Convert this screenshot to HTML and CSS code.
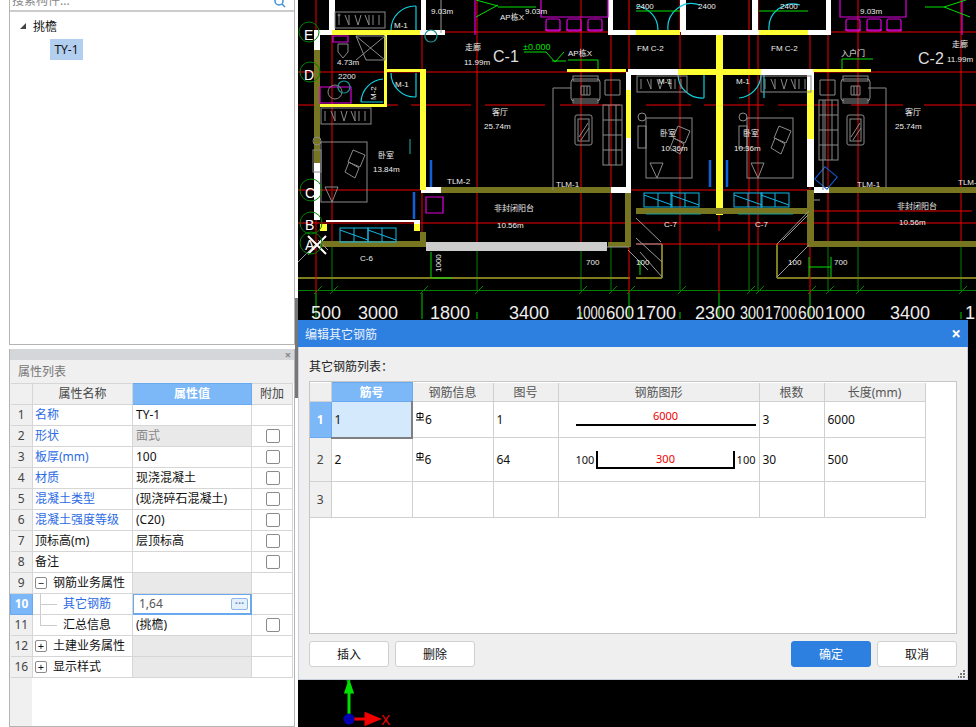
FILE: index.html
```html
<!DOCTYPE html>
<html lang="en">
<head>
<meta charset="UTF-8" />
<title>编辑其它钢筋</title>
<link rel="stylesheet" href="styles.css">
</head>
<body>

<aside class="side">
  <section class="tree-panel">
    <div class="search">
      <span class="search-text">搜索构件...</span>
      <svg class="search-icon" width="12" height="10" viewBox="0 0 12 10"><circle cx="5" cy="1" r="4"/><path d="M8 4l3 3"/></svg>
    </div>
    <div class="tree-group"><span class="tree-arrow"></span>挑檐</div>
    <div class="tree-leaf">TY-1</div>
  </section>

  <section class="prop-panel">
    <div class="prop-strip">×</div>
    <div class="prop-title">属性列表</div>
    <table class="prop-table">
      <colgroup><col class="c-no"><col class="c-name"><col class="c-val"><col class="c-add"></colgroup>
      <tr><th></th><th>属性名称</th><th class="sel">属性值</th><th>附加</th></tr>
      <tr><td class="no">1</td><td class="link">名称</td><td>TY-1</td><td></td></tr>
      <tr><td class="no">2</td><td class="link">形状</td><td class="off">面式</td><td class="chk"><span class="box"></span></td></tr>
      <tr><td class="no">3</td><td class="link">板厚(mm)</td><td>100</td><td class="chk"><span class="box"></span></td></tr>
      <tr><td class="no">4</td><td class="link">材质</td><td>现浇混凝土</td><td class="chk"><span class="box"></span></td></tr>
      <tr><td class="no">5</td><td class="link">混凝土类型</td><td>(现浇碎石混凝土)</td><td class="chk"><span class="box"></span></td></tr>
      <tr><td class="no">6</td><td class="link">混凝土强度等级</td><td>(C20)</td><td class="chk"><span class="box"></span></td></tr>
      <tr><td class="no">7</td><td>顶标高(m)</td><td>层顶标高</td><td class="chk"><span class="box"></span></td></tr>
      <tr><td class="no">8</td><td>备注</td><td></td><td class="chk"><span class="box"></span></td></tr>
      <tr><td class="no">9</td><td><div class="cell-row"><span class="fold">−</span>钢筋业务属性</div></td><td class="grp"></td><td></td></tr>
      <tr><td class="no cur">10</td><td class="flush"><div class="cell-row link"><span class="branch"></span>其它钢筋</div></td>
        <td class="editing"><div class="edit-row">1,64<span class="more">···</span></div></td><td></td></tr>
      <tr><td class="no">11</td><td class="flush"><div class="cell-row"><span class="branch last"></span>汇总信息</div></td><td>(挑檐)</td><td class="chk"><span class="box"></span></td></tr>
      <tr><td class="no">12</td><td><div class="cell-row"><span class="fold">+</span>土建业务属性</div></td><td class="grp"></td><td></td></tr>
      <tr><td class="no">16</td><td><div class="cell-row"><span class="fold">+</span>显示样式</div></td><td class="grp"></td><td></td></tr>
    </table>
  </section>
  <span class="splitter"></span>
</aside>

<main class="cad">
  <svg class="plan" width="678" height="727" viewBox="298 0 678 727">
    <defs>
      <g id="rebar-box">
        <rect width="28" height="14"/><path d="M0 2l28 10M14 0v14"/>
      </g>
      <g id="sofa">
        <rect x="0" y="0" width="29" height="22" rx="3"/><rect x="2" y="-3" width="25" height="5"/><rect x="2" y="20" width="25" height="4"/>
        <path d="M10 7h9v9h-9zM13 7v9M16 7v9"/>
      </g>
      <g id="couch">
        <rect x="0" y="0" width="19" height="60"/><path d="M6 0v60M13 0v60M0 15h19M0 30h19M0 45h19"/>
      </g>
      <g id="table">
        <rect x="0" y="0" width="17" height="30" rx="2"/><rect x="3" y="4" width="11" height="22"/><path d="M4 22l9-14M6 25l8-12"/>
      </g>
      <g id="bed">
        <rect x="0" y="0" width="46" height="60"/><rect x="-8" y="8" width="8" height="22"/><path d="M4 45l7 15 6-15zM32 8l12 5-5 12-12-5zM28 20l10 6-4 10-10-6z"/>
        <circle cx="-4" cy="-1" r="4"/>
      </g>
      <g id="wc-strip">
        <rect x="0" y="0" width="50" height="16"/><path d="M4 3v10M10 3l4 10V3M20 3l3 10 3-10M30 3l4 10V3M38 3v10M44 3v10"/>
      </g>
      <g id="chair">
        <rect x="0" y="0" width="14" height="12" rx="2"/><path d="M-1 11h16"/>
      </g>
    </defs>

    <!-- grid -->
    <path class="dk-green" d="M298 290.5H976M332 245v45M477 245v45M581 245v45M611 245v45M680 245v45M749 245v45M758 245v45M828 245v45M858 245v45M961 245v45"/>
    <path class="dk-green" d="M314 294l8-8M330 294l8-8M420 294l8-8M475 294l8-8M579 294l8-8M609 294l8-8M627 294l8-8M678 294l8-8M747 294l8-8M756 294l8-8M808 294l8-8M826 294l8-8M856 294l8-8M959 294l8-8"/>
    <path class="green" d="M316 293v26M422 293v26M629 293v26M719 293v26M810 293v26M477 312v7M581 312v7M680 312v7M749 312v7M961 312v7"/>
    <path class="olive-line" d="M298 278H630M636 278H662M777 278H976M777 244V278M662 244V278"/>

    <path class="red" d="M315 32H976M298 72H628M811 72H976M298 105H315M320 105H398M411 105H471M485 105H545M560 105H620M646 105H691M704 105H764M778 105H838M851 105H903M924 105H976"/>
    <path class="red" d="M298 190H716M723 190H809M298 223H976M813 211H972M636 244H808"/>
    <path class="red" d="M316 0V293M422 30V245M477 0V245M581 0V245M611 0V245M629 0V293M680 0V245M749 0V245M758 0V245M810 32V294M828 0V245M858 0V245M961 0V245M719 215V231M719 245V293"/>
    <path class="dk-red" d="M332 32V245"/>

    <!-- walls -->
    <path class="white" d="M329 0h6v30h-6zM314 30h20v5h-20zM314 35h6v15h-6zM421 0h5v30h-5zM420 30h25v5h-25zM608 0h5v30h-5zM608 30h28v5h-28zM681 30h78v5h-78zM680 0h6v32h-6zM752 0h6v32h-6zM808 30h23v5h-23zM826 0h5v32h-5z"/>
    <path class="white" d="M636 69h42v6h-42zM761 69h52v6h-52zM626 72h5v18h-5zM626 138h5v50h-5zM807 72h7v18h-7zM807 139h7v48h-7zM814 187h15v6h-15zM611 187h20v6h-20zM421 160h5v33h-5zM426 187h15v6h-15zM314 163h6v57h-6zM414 220h6v10h-6zM326 220h88v2h-88zM628 69h8v6h-8z"/>
    <path class="yellow" d="M332 30h88v5h-88zM636 30h44v5h-44zM759 30h49v5h-49zM384 32h3v73h-3zM317 104h70v3h-70zM386 69h40v3h-40zM420 72h6v118h-6zM567 69h59v3h-59zM626 90h5v48h-5zM678 69h83v6h-83zM716 35h7v173h-7zM807 90h7v49h-7zM813 69h58v3h-58zM320 224h7v7h-7zM414 224h6v7h-6zM716 208h7v7h-7z"/>
    <path class="olive" d="M314 50h6v113h-6zM320 241h106v6h-106zM420 232h6v9h-6zM441 187h170v6h-170zM625 193h6v54h-6zM608 242h23v5h-23zM636 208h172v6h-172zM829 187h147v6h-147zM807 190h7v57h-7zM811 241h165v6h-165z"/>
    <rect class="concrete" x="426" y="242" width="181" height="9"/>

    <!-- doors, windows -->
    <path class="cyan" d="M416 6A24 24 0 0 0 391 30M416 6V30M391 73A24 24 0 0 0 416 97M416 73V97M361 102A24 24 0 0 1 383 79M361 102H383"/>
    <path class="cyan" d="M636 6A24 24 0 0 1 658 30M668 30A24 24 0 0 1 700 5M769 30A24 24 0 0 1 800 5M678 75A24 24 0 0 0 704 98M704 75V98M764 75V98M739 98A24 24 0 0 0 761 75"/>
    <g class="cyan-box">
      <use href="#rebar-box" x="340" y="228"/><use href="#rebar-box" x="368" y="228"/>
      <use href="#rebar-box" x="644" y="193"/><use href="#rebar-box" x="671" y="193"/>
      <use href="#rebar-box" x="734" y="193"/><use href="#rebar-box" x="761" y="193"/>
    </g>
    <path class="cyan-thin" d="M646 214h55M738 214h55"/>
    <path class="blue" d="M431 160V187M414 192V219M710 160V187M727 160V187"/>
    <rect class="blue-thin" x="818" y="170" width="16" height="16" transform="rotate(40 826 178)"/>

    <!-- magenta -->
    <path class="magenta" d="M333 36h15v6h-15zM320 87h31v16h-31zM475 0v35M541 0v17h67V0M840 0v17h66V0M962 0v35M426 197h17v16h-17z"/>
    <g class="magenta">
      <use href="#chair" x="546" y="19"/><use href="#chair" x="567" y="19"/><use href="#chair" x="588" y="19"/>
      <use href="#chair" x="846" y="19"/><use href="#chair" x="867" y="19"/><use href="#chair" x="887" y="19"/>
    </g>

    <!-- green marks -->
    <path class="bright" d="M476 17L498 5M498 6L476 0M498 7H536M636 11H680M759 11H808M524 52H546L555 62L564 52M552 61H566M568 60H598V69M842 69V59H873M944 7L966 0M944 7L970 17M925 7H944M431 252V278M433 278H452M640 260v15M809 267H831M809 257v20M831 257v20"/>
    <text class="lbl-green" x="523" y="50">±0.000</text>

    <!-- furniture -->
    <g class="gray">
      <use href="#wc-strip" x="335" y="12"/><use href="#wc-strip" x="321" y="108"/>
      <use href="#wc-strip" x="637" y="76"/><use href="#wc-strip" x="761" y="76"/>
      <path d="M356 36h29v24h-19zM356 36l29 24M385 36l-29 24M553 190V88h18"/>
      <path d="M338 44h10v8l-5 6-5-6z"/>
      <use href="#sofa" x="571" y="79"/><use href="#sofa" x="841" y="79"/>
      <use href="#table" x="575" y="115"/><use href="#table" x="847" y="115"/>
      <use href="#couch" x="603" y="105"/><use href="#couch" x="819" y="100"/>
      <path d="M868 88h18v100M605 80h15v15h-15zM820 80h15v15h-15zM823 190V100"/>
      <use href="#bed" x="321" y="142" /><use href="#bed" x="646" y="118"/><use href="#bed" x="747" y="118"/>
      <circle cx="335" cy="92" r="7"/><circle cx="339" cy="15" r="1"/>
    </g>
    <path class="teal" d="M344 93a6 6 0 1 0-.1 0M431 42a6 6 0 1 0-.1 0M410 139v15"/>
    <path class="concrete-line" d="M441 0v33M820 200l-6 0M636 218l25 24M808 215l-25 25M777 244l32-33M636 238l26 24M777 277l32-32M662 244H636M607 247l22 0M628 250l20 20M298 262l18-18M318 240l10 10M662 277L640 252"/>
    <path class="cross" d="M308 236L326 254M326 236L308 254"/>
    <circle class="grid-ring" cx="309" cy="32" r="10"/><circle class="grid-ring" cx="310" cy="72" r="10"/><circle class="grid-ring" cx="311" cy="190" r="11"/><circle class="grid-ring" cx="311" cy="223" r="11"/><circle class="grid-ring" cx="311" cy="243" r="11"/>

    <!-- labels -->
    <g class="lbl">
      <text x="394" y="28">M-1</text><text x="395" y="87">M-1</text>
      <text x="376" y="100" transform="rotate(-90 376 100)">M-2</text>
      <text x="658" y="84">M-1</text><text x="736" y="84">M-1</text><text x="698" y="9">2400</text><text x="780" y="9">2400</text><text x="636" y="9">2400</text>
      <text x="337" y="65">4.73m</text><text x="338" y="79">2200</text><text x="464" y="65">11.99m</text>
      <text x="484" y="129">25.74m</text><text x="895" y="129">25.74m</text><text x="947" y="62">11.99m</text>
      <text x="431" y="14">9.03m</text><text x="525" y="14">9.03m</text><text x="860" y="14">9.03m</text>
      <text x="492" y="115">客厅</text><text x="905" y="115">客厅</text><text x="465" y="50">走廊</text><text x="952" y="47">走廊</text>
      <text x="373" y="172">13.84m</text><text x="378" y="158">卧室</text><text x="660" y="136">卧室</text><text x="743" y="136">卧室</text>
      <text x="661" y="151">10.36m</text><text x="734" y="151">10.36m</text>
      <text x="447" y="184">TLM-2</text><text x="556" y="187">TLM-1</text><text x="857" y="187">TLM-1</text><text x="958" y="185">TLM-</text>
      <text x="494" y="211">非封闭阳台</text><text x="897" y="209">非封闭阳台</text><text x="497" y="228">10.56m</text><text x="899" y="225">10.56m</text>
      <text x="360" y="261">C-6</text><text x="664" y="227">C-7</text><text x="755" y="227">C-7</text>
      <text x="586" y="265">700</text><text x="788" y="265">100</text><text x="834" y="265">700</text><text x="636" y="265">100</text>
      <text x="441" y="272" transform="rotate(-90 441 272)">1000</text>
      <text x="637" y="51">FM C-2</text><text x="771" y="51">FM C-2</text><text x="500" y="20">AP栋X</text><text x="568" y="56">AP栋X</text><text x="841" y="56">入户门</text>
    </g>
    <text class="lbl-big" x="493" y="62">C-1</text><text class="lbl-big" x="918" y="64">C-2</text>
    <g class="lbl-axis">
      <text x="304" y="40">E</text><text x="304" y="80">D</text><text x="305" y="198">C</text><text x="305" y="230">B</text><text x="305" y="250">A</text>
    </g>
    <g class="dim">
      <text x="311" y="319">500</text><text x="358" y="319">3000</text><text x="430" y="319">1800</text><text x="509" y="319">3400</text>
      <text x="576" y="319" textLength="29" lengthAdjust="spacingAndGlyphs">1000</text><text x="606" y="319" textLength="28" lengthAdjust="spacingAndGlyphs">600</text><text x="636" y="319">1700</text><text x="695" y="319">2300</text><text x="740" y="319" textLength="24" lengthAdjust="spacingAndGlyphs">300</text>
      <text x="765" y="319" textLength="32" lengthAdjust="spacingAndGlyphs">1700</text><text x="798" y="319" textLength="26" lengthAdjust="spacingAndGlyphs">600</text><text x="825" y="319">1000</text><text x="890" y="319">3400</text><text x="965" y="319">1</text>
    </g>

    <!-- axis marker -->
    <text class="axis-y-txt" x="345" y="686">Y</text>
    <path class="axis-y" d="M349 719V692M346 692L349 683L352 692Z"/>
    <path class="axis-x" d="M349 719H366M366 714L378 719L366 724Z"/>
    <circle class="axis-o" cx="349" cy="719" r="5.5"/>
    <text class="axis-x-txt" x="381" y="725">X</text>
  </svg>

  <div class="dialog">
    <div class="dialog-title"><span>编辑其它钢筋</span><span class="dialog-close">×</span></div>
    <div class="dialog-body">
      <div class="list-label">其它钢筋列表：</div>
      <div class="grid-box">
        <table class="rebar-table">
          <colgroup><col class="r-no"><col class="r-id"><col class="r-info"><col class="r-fig"><col class="r-shape"><col class="r-num"><col class="r-len"></colgroup>
          <tr><th></th><th class="sel">筋号</th><th>钢筋信息</th><th>图号</th><th>钢筋图形</th><th>根数</th><th>长度(mm)</th></tr>
          <tr class="row-a">
            <td class="no cur">1</td><td class="cell-sel">1</td>
            <td><svg class="grade" width="8" height="9" viewBox="0 0 8 9"><path d="M1 1.5h6v4H1zM4 0v8M0 8h8"/></svg>6</td>
            <td>1</td>
            <td class="shape"><div class="bar-label">6000</div><div class="bar-line"></div></td>
            <td>3</td><td>6000</td>
          </tr>
          <tr class="row-b">
            <td class="no">2</td><td>2</td>
            <td><svg class="grade" width="8" height="9" viewBox="0 0 8 9"><path d="M1 1.5h6v4H1zM4 0v8M0 8h8"/></svg>6</td>
            <td>64</td>
            <td class="shape"><div class="bar-row"><span>100</span><div class="bracket">300</div><span>100</span></div></td>
            <td>30</td><td>500</td>
          </tr>
          <tr class="row-a"><td class="no">3</td><td></td><td></td><td></td><td></td><td></td><td></td></tr>
        </table>
      </div>
      <div class="actions">
        <button class="btn">插入</button>
        <button class="btn">删除</button>
        <span class="spacer"></span>
        <button class="btn primary">确定</button>
        <button class="btn">取消</button>
      </div>
    </div>
    <svg class="grip" width="8" height="8" viewBox="0 0 8 8"><path d="M5 0h2v2H5zM2 3h2v2H2zM5 3h2v2H5zM-1 6h2v2h-2zM2 6h2v2H2zM5 6h2v2H5z"/></svg>
  </div>
</main>

</body>
</html>
```

FILE: styles.css
```css
html, body {
  margin: 0;
  padding: 0;
  height: 100%;
  overflow: hidden;
}
body {
  display: flex;
  background: #fff;
  font-family: "Noto Sans", "Noto Sans CJK SC", sans-serif;
  font-size: 12px;
  color: #111;
}

/* left column */
.side {
  position: relative;
  width: 298px;
  flex: none;
  height: 727px;
  padding-left: 9px;
  padding-right: 3px;
  box-sizing: border-box;
  display: flex;
  flex-direction: column;
  gap: 4px;
}
.tree-panel {
  height: 345px;
  flex: none;
  box-sizing: border-box;
  border: 1px solid #b4b4b4;
  border-top: 0;
}
.search {
  height: 10px;
  overflow: hidden;
  display: flex;
  justify-content: space-between;
  padding: 0 8px 0 2px;
  border-bottom: 2px solid #ccc;
}
.search-text {
  color: #888;
  line-height: 12px;
  margin-top: -5px;
}
.search-icon circle, .search-icon path {
  fill: none;
  stroke: #3f8fd8;
  stroke-width: 1.5;
}
.tree-group {
  display: flex;
  align-items: center;
  height: 20px;
  margin-top: 4px;
  padding-left: 10px;
  gap: 7px;
  font-size: 12px;
}
.tree-arrow {
  width: 0;
  height: 0;
  border-left: 6px solid transparent;
  border-bottom: 6px solid #444;
}
.tree-leaf {
  width: 33px;
  height: 21px;
  margin: 3px 0 0 40px;
  line-height: 21px;
  text-align: center;
  background: #b3cfef;
}

.prop-panel {
  flex: 1;
  display: flex;
  flex-direction: column;
  border: 1px solid #b4b4b4;
  border-top: 0;
  background: #fff;
  background-image: linear-gradient(#f0f0f0, #f0f0f0);
  background-repeat: no-repeat;
  background-size: 22px 100%;
}
.prop-strip {
  height: 11px;
  line-height: 11px;
  background: #d5d6d9;
  color: #888;
  text-align: right;
  padding-right: 3px;
  font-size: 11px;
  font-weight: bold;
}
.prop-title {
  height: 23px;
  line-height: 23px;
  background: #f0f0f0;
  color: #777;
  padding-left: 8px;
}
.prop-table {
  border-collapse: collapse;
  table-layout: fixed;
  width: 282px;
}
.c-no { width: 22px; }
.c-name { width: 100px; }
.c-val { width: 119px; }
.c-add { width: 41px; }
.prop-table th, .prop-table td {
  height: 21px;
  padding: 0 3px;
  box-sizing: border-box;
  border: 1px solid #d6d6d6;
  font-weight: normal;
  white-space: nowrap;
  overflow: hidden;
  line-height: 20px;
}
.prop-table td:nth-child(2) { padding-left: 2px; }
.prop-table th {
  height: 20px;
  background: #f0f0f0;
  color: #444;
}
.prop-table tr > :first-child { border-left: 0; }
th.sel {
  background: #7cb8f8 !important;
  color: #fff !important;
  font-weight: bold !important;
  border: 1px solid #69a9ee !important;
}
td.no {
  background: #f0f0f0;
  color: #444;
  text-align: center;
  font-size: 12px;
  padding: 0 !important;
}
td.no.cur {
  background: #7cb8f8;
  color: #fff;
  font-weight: bold;
  border: 1px solid #69a9ee;
}
.link { color: #2b6be4; }
td.off {
  background: #e9e9e9;
  color: #888;
}
td.grp { background: #e9e9e9; }
.prop-table td.chk {
  text-align: center;
  padding: 0 0 0 1px;
  line-height: 0;
}
.box {
  display: inline-block;
  width: 12px;
  height: 12px;
  vertical-align: middle;
  border: 1px solid #8a8a8a;
  border-radius: 2px;
}
.cell-row {
  display: flex;
  align-items: center;
  height: 20px;
}
.fold {
  width: 10px;
  height: 10px;
  line-height: 9px;
  margin-right: 6px;
  flex: none;
  text-align: center;
  border: 1px solid #8a8a8a;
  border-radius: 2px;
  font-size: 11px;
}
.prop-table td.flush { padding: 0 0 0 7px; }
.branch {
  align-self: stretch;
  width: 17px;
  margin-right: 6px;
  flex: none;
  background:
    linear-gradient(#ccc, #ccc) 0 0 / 1px 100% no-repeat,
    linear-gradient(#ccc, #ccc) 0 10px / 100% 1px no-repeat;
}
.branch.last {
  background:
    linear-gradient(#ccc, #ccc) 0 0 / 1px 11px no-repeat,
    linear-gradient(#ccc, #ccc) 0 10px / 100% 1px no-repeat;
}
.prop-table td.editing {
  padding: 0;
  border: 1px solid #69a9ee;
  box-shadow: inset 0 0 0 1px #69a9ee;
}
.edit-row {
  display: flex;
  justify-content: space-between;
  align-items: center;
  padding: 0 3px 0 6px;
  color: #555;
  height: 20px;
}
.more {
  width: 15px;
  height: 10px;
  line-height: 7px;
  text-align: center;
  border: 1px solid #8ab8e8;
  border-radius: 2px;
  background: #e6f0fb;
  color: #5c8fc4;
  font-weight: bold;
  font-size: 11px;
}
.splitter {
  position: absolute;
  right: 0;
  top: 298px;
  width: 3px;
  height: 100px;
  background: #777;
}

/* drawing */
.cad {
  position: relative;
  flex: 1;
  background: #000;
  overflow: hidden;
}
.plan {
  display: block;
  fill: none;
}
.dk-green { stroke: #008000; }
.green { stroke: #00c800; }
.bright { stroke: #00e000; }
.olive-line { stroke: #807c20; stroke-width: 2; }
.red { stroke: #f00000; }
.dk-red { stroke: #a00000; stroke-width: 1.5; }
.white { fill: #fff; }
.yellow { fill: #ffff33; }
.olive { fill: #77751f; }
.concrete { fill: #ccc; }
.cyan { stroke: #10d0e0; stroke-width: 1.2; }
.cyan-box { stroke: #10b8e8; }
.cyan-thin { stroke: #10a0a0; }
.blue { stroke: #1060d8; stroke-width: 2.5; }
.blue-thin { stroke: #1060d8; }
.magenta { stroke: #e000e0; stroke-width: 1.2; }
.gray { stroke: #8a8a8a; }
.teal { stroke: #209090; stroke-width: 1.2; }
.concrete-line { stroke: #999; }
.cross { stroke: #fff; stroke-width: 2; }
.grid-ring { stroke: #008000; }
.lbl {
  fill: #eee;
  font: 8px "Liberation Sans", "Noto Sans CJK SC", sans-serif;
}
.lbl-green {
  fill: #00e000;
  font: 9px "Liberation Sans", sans-serif;
}
.lbl-big {
  fill: #ddd;
  font: 16px "Liberation Sans", sans-serif;
}
.lbl-axis {
  fill: #fff;
  font: 14px "Liberation Sans", sans-serif;
}
.dim {
  fill: #eee;
  font: 18px "Liberation Sans", sans-serif;
}
.axis-y { stroke: #00e000; stroke-width: 3; fill: #00e000; }
.axis-x { stroke: #f00000; stroke-width: 3; fill: #f00000; }
.axis-o { fill: #0000b0; }
.axis-x-txt {
  fill: #f00000;
  font: 14px "Liberation Sans", sans-serif;
}
.axis-y-txt {
  fill: #00e000;
  font: 10px "Liberation Sans", sans-serif;
}

/* dialog */
.dialog {
  position: absolute;
  left: 0;
  top: 320px;
  width: 670px;
  height: 360px;
  display: flex;
  flex-direction: column;
  background: #efefef;
  box-sizing: border-box;
  border: 1px solid #c8cede;
  border-top: 0;
}
.dialog-title {
  height: 27px;
  flex: none;
  margin: 0 -1px;
  padding: 0 7px 0 7px;
  display: flex;
  justify-content: space-between;
  align-items: center;
  background: #2d7fe0;
  color: #eaf2fc;
}
.dialog-close {
  color: #fff;
  font-size: 17px;
  font-weight: bold;
}
.dialog-body {
  flex: 1;
  display: flex;
  flex-direction: column;
  padding: 0 10px 12px 10px;
}
.list-label {
  height: 34px;
  line-height: 40px;
  color: #222;
}
.grid-box {
  flex: 1;
  background: #fff;
  border: 1px solid #c6c6c6;
}
.rebar-table {
  border-collapse: collapse;
  table-layout: fixed;
  width: 615px;
}
.r-no { width: 21px; }
.r-id { width: 81px; }
.r-info { width: 81px; }
.r-fig { width: 65px; }
.r-shape { width: 201px; }
.r-num { width: 65px; }
.r-len { width: 101px; }
.rebar-table th, .rebar-table td {
  box-sizing: border-box;
  padding: 0 3px;
  border: 1px solid #d0d0d0;
  font-weight: normal;
  white-space: nowrap;
}
.rebar-table tr > :first-child { border-left: 0; }
.rebar-table tr:first-child > * { border-top: 0; }
.rebar-table th {
  height: 19px;
  background: #efefef;
  color: #555;
}
.row-a td { height: 36px; }
.row-b td { height: 44px; }
.rebar-table td.cell-sel {
  background: #d5e9fd;
  border-right: 2px solid #808080;
  border-bottom: 2px solid #808080;
}
.rebar-table td.shape { padding: 0 3px 0 17px; }
.grade {
  fill: none;
  stroke: #111;
  stroke-width: 1;
  margin-right: 1px;
  vertical-align: 3px;
}
.bar-label {
  color: #f00000;
  font-size: 11px;
  line-height: 14px;
  text-align: center;
  margin-top: -4px;
}
.bar-line {
  height: 2px;
  background: #000;
  margin-top: 1px;
}
.bar-row {
  display: flex;
  align-items: center;
  gap: 2px;
  font-size: 11px;
}
.bracket {
  flex: 1;
  height: 16px;
  line-height: 16px;
  border: 2px solid #000;
  border-top: 0;
  color: #f00000;
  text-align: center;
}
.actions {
  display: flex;
  gap: 6px;
  margin-top: 7px;
}
.spacer { flex: 1; }
.btn {
  width: 80px;
  height: 26px;
  padding: 0;
  border: 1px solid #d0d0d0;
  border-radius: 3px;
  background: #fff;
  color: #111;
  font: inherit;
}
.btn.primary {
  background: #2d7fe0;
  border-color: #2d7fe0;
  color: #fff;
}
.grip {
  position: absolute;
  right: 1px;
  bottom: 1px;
  fill: #777;
}
```
